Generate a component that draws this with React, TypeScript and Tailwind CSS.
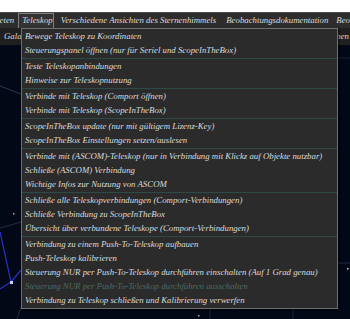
import React from "react";

type Entry = { label: string; disabled?: boolean } | "sep";

const MENU: Entry[] = [
  { label: "Bewege Teleskop zu Koordinaten" },
  { label: "Steuerungspanel öffnen (nur für Seriel und ScopeInTheBox)" },
  "sep",
  { label: "Teste Teleskopanbindungen" },
  { label: "Hinweise zur Teleskopnutzung" },
  "sep",
  { label: "Verbinde mit Teleskop (Comport öffnen)" },
  { label: "Verbinde mit Teleskop (ScopeInTheBox)" },
  "sep",
  { label: "ScopeInTheBox update (nur mit gültigem Lizenz-Key)" },
  { label: "ScopeInTheBox Einstellungen setzen/auslesen" },
  "sep",
  { label: "Verbinde mit (ASCOM)-Teleskop (nur in Verbindung mit Klickz auf Objekte nutzbar)" },
  { label: "Schließe (ASCOM) Verbindung" },
  { label: "Wichtige Infos zur Nutzung von ASCOM" },
  "sep",
  { label: "Schließe alle Teleskopverbindungen (Comport-Verbindungen)" },
  { label: "Schließe Verbindung zu ScopeInTheBox" },
  { label: "Übersicht über verbundene Teleskope (Comport-Verbindungen)" },
  "sep",
  { label: "Verbindung zu einem Push-To-Teleskop aufbauen" },
  { label: "Push-Teleskop kalibrieren" },
  { label: "Steuerung NUR per Push-To-Teleskop durchführen einschalten (Auf 1 Grad genau)" },
  { label: "Steuerung NUR per Push-To-Teleskop durchführen ausschalten", disabled: true },
  { label: "Verbindung zu Teleskop schließen und Kalibrierung verwerfen" },
];

function StarMap() {
  return (
    <svg className="absolute inset-0" width="350" height="274" viewBox="0 45 350 274">
      <line x1="0" y1="86" x2="21" y2="94" stroke="#3a4458" strokeWidth="0.8" />
      <line x1="0" y1="232" x2="11" y2="282" stroke="#2730c8" strokeWidth="1.2" />
      <line x1="11" y1="282" x2="21" y2="270" stroke="#2730c8" strokeWidth="1.2" />
      <line x1="11" y1="282" x2="0" y2="289" stroke="#2730c8" strokeWidth="1.2" />
      <line x1="0" y1="228" x2="21" y2="222" stroke="#2a3550" strokeWidth="0.8" />
      <line x1="21" y1="307" x2="17" y2="319" stroke="#2a3550" strokeWidth="0.8" />
      <line x1="210" y1="308" x2="210" y2="319" stroke="#1f2a40" strokeWidth="0.8" />
      <line x1="293" y1="308" x2="293" y2="319" stroke="#1f2a40" strokeWidth="0.8" />
      <line x1="338" y1="263" x2="350" y2="263" stroke="#2a3550" strokeWidth="0.8" />
      <line x1="338" y1="58" x2="350" y2="58" stroke="#1f2a40" strokeWidth="0.8" />
      <rect x="10" y="281" width="3" height="3" fill="#c8d0ff" />
      <rect x="13" y="213" width="1.5" height="1.5" fill="#aab" />
      <rect x="347" y="268" width="1.5" height="1.5" fill="#ccd" />
      <rect x="198" y="315" width="1.5" height="1.5" fill="#aab" />
    </svg>
  );
}

export default function App() {
  return (
    <div className="relative w-[350px] h-[319px] overflow-hidden bg-[#030816] flex flex-col font-['Liberation_Serif',serif] italic text-[8.8px] text-[#dcdcdc]">
      <div className="h-[12px] bg-white shrink-0" />
      <div className="h-[16px] bg-[#2d2d2d] border-t border-[#4a4a4a] flex items-stretch whitespace-nowrap shrink-0">
        <div className="-ml-[17px] pr-[3px] flex items-center">Planeten</div>
        <div className="w-px bg-[#555] my-[1px]" />
        <div className="ml-[1px] w-[38px] pl-[3px] flex items-center border border-b-0 border-[#7d7d7d] bg-[#333]">Teleskop</div>
        <div className="pl-[7px] pr-[6px] flex items-center">Verschiedene Ansichten des Sternenhimmels</div>
        <div className="px-[4px] flex items-center">Beobachtungsdokumentation</div>
        <div className="px-[4px] flex items-center">Beobachtungen</div>
      </div>
      <div className="h-[17px] bg-[#202020] flex items-center justify-between whitespace-nowrap shrink-0">
        <span className="pl-[4px]">Gala</span>
        <span className="pr-[1px]">Sternen</span>
      </div>
      <div className="relative flex-1">
        <StarMap />
      </div>

      <div className="absolute left-[21px] top-[28px] w-[317px] bg-[#2b2b2b] border border-[#6e6e6e] pb-[1px] shadow-[1px_1px_2px_rgba(0,0,0,0.6)]">
        {MENU.map((m, i) =>
          m === "sep" ? (
            <div key={i} className="h-[2px] flex items-center">
              <div className="h-px w-full bg-[#2e4a46]" />
            </div>
          ) : (
            <div
              key={i}
              className={`h-[14px] leading-[14px] pl-[3px] whitespace-nowrap overflow-hidden ${m.disabled ? "text-[#4e6a62]" : "text-[#dcdcdc]"}`}
            >
              {m.label}
            </div>
          )
        )}
      </div>
    </div>
  );
}
